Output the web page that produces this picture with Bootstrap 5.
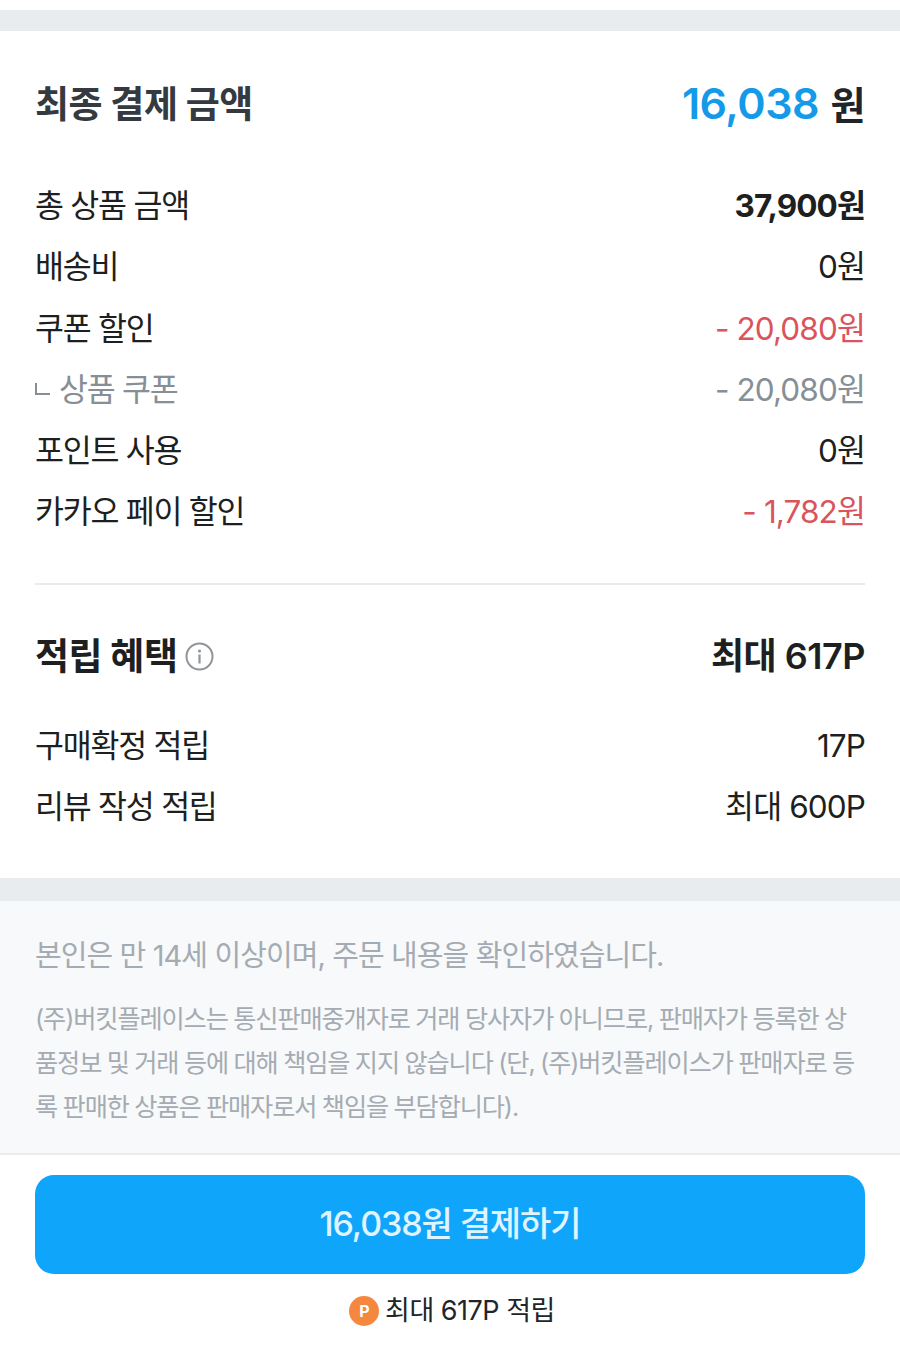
<!DOCTYPE html>
<html lang="ko">
<head>
<meta charset="utf-8">
<title>결제</title>
<link href="https://cdn.jsdelivr.net/npm/bootstrap@5.3.0/dist/css/bootstrap.min.css" rel="stylesheet">
<style>
html,body{background:#fff;}
body{font-family:Inter,"Noto Sans CJK KR",sans-serif;color:#1d1f21;height:1347px;overflow:hidden;letter-spacing:-1.25px;}
.top-gap{height:10px;}
.band{height:21px;background:#e9ecef;}
.band-b{height:23px;background:#e9ecef;margin-top:41px;}
.sec{padding:0 35px;}
.head{height:61px;font-size:37px;font-weight:700;line-height:61px;letter-spacing:-.5px;}
.head-a{margin-top:43px;margin-bottom:40px;color:#343a40;}
.blue{color:#149ae8;font-size:43px;font-weight:600;}
.won{color:#212529;font-size:38px;margin-left:3px;}
.rw{height:61.3px;line-height:61.3px;font-size:31.5px;}
.rw span+span{letter-spacing:-.9px;}
.red{color:#d9545c;}
.mute{color:#868e96;}
.elbow{display:inline-block;width:15px;height:12px;border-left:2px solid #868e96;border-bottom:2px solid #868e96;margin-right:9px;position:relative;top:-6px;}
.rule{height:2px;background:#e9ecef;margin-top:40px;}
.head-b{margin-top:41px;margin-bottom:28px;color:#1d1f21;}
.head-b .v{font-size:36px;font-weight:600;}
.info{width:29px;height:29px;margin-left:8px;vertical-align:-1px;}
.notice{background:#f8f9fa;height:254px;color:#a4abb2;border-bottom:2px solid #e9ecef;padding-top:31px;}
.n1{font-size:29px;line-height:48px;margin-bottom:17px;letter-spacing:-.9px;}
.n2{font-size:25.2px;line-height:44px;margin:0;letter-spacing:-1.1px;word-spacing:-.5px;}
.cta{display:block;width:100%;height:99px;margin-top:20px;padding-bottom:8px;background:#0ea5fb;border:0;border-radius:19px;color:#e0f4ff;font-size:34px;font-weight:500;letter-spacing:-1.1px;}
.save{font-size:27px;margin-top:17px;height:40px;color:#212529;letter-spacing:-.5px;padding-left:4px;}
.coin{width:30px;height:30px;border-radius:50%;background:#f6873f;color:#fff;font-size:16px;font-weight:700;margin-right:6px;}
</style>
</head>
<body>
<div class="top-gap"></div>
<div class="band"></div>
<section class="sec">
  <div class="head head-a d-flex justify-content-between align-items-center">
    <span>최종 결제 금액</span>
    <span><span class="blue">16,038</span><span class="won"> 원</span></span>
  </div>
  <div class="rw d-flex justify-content-between"><span>총 상품 금액</span><span class="fw-bold">37,900원</span></div>
  <div class="rw d-flex justify-content-between"><span>배송비</span><span>0원</span></div>
  <div class="rw d-flex justify-content-between"><span>쿠폰 할인</span><span class="red">- 20,080원</span></div>
  <div class="rw d-flex justify-content-between mute"><span><i class="elbow"></i>상품 쿠폰</span><span>- 20,080원</span></div>
  <div class="rw d-flex justify-content-between"><span>포인트 사용</span><span>0원</span></div>
  <div class="rw d-flex justify-content-between"><span>카카오 페이 할인</span><span class="red">- 1,782원</span></div>
  <div class="rule"></div>
  <div class="head head-b d-flex justify-content-between align-items-center">
    <span>적립 혜택<svg class="info" viewBox="0 0 29 29" fill="none"><circle cx="14.5" cy="14.5" r="13" stroke="#8f959b" stroke-width="2"/><circle cx="14.5" cy="9" r="1.6" fill="#8f959b"/><rect x="13.4" y="12.5" width="2.2" height="9" fill="#8f959b"/></svg></span>
    <span class="v">최대 617P</span>
  </div>
  <div class="rw d-flex justify-content-between"><span>구매확정 적립</span><span>17P</span></div>
  <div class="rw d-flex justify-content-between"><span>리뷰 작성 적립</span><span>최대 600P</span></div>
</section>
<div class="band-b"></div>
<section class="notice sec">
  <p class="n1">본인은 만 14세 이상이며, 주문 내용을 확인하였습니다.</p>
  <p class="n2">(주)버킷플레이스는 통신판매중개자로 거래 당사자가 아니므로, 판매자가 등록한 상품정보 및 거래 등에 대해 책임을 지지 않습니다 (단, (주)버킷플레이스가 판매자로 등록 판매한 상품은 판매자로서 책임을 부담합니다).</p>
</section>
<section class="sec">
  <button type="button" class="btn cta">16,038원 결제하기</button>
  <div class="save d-flex justify-content-center align-items-center"><span class="coin d-inline-flex justify-content-center align-items-center">P</span>최대 617P 적립</div>
</section>
</body>
</html>
